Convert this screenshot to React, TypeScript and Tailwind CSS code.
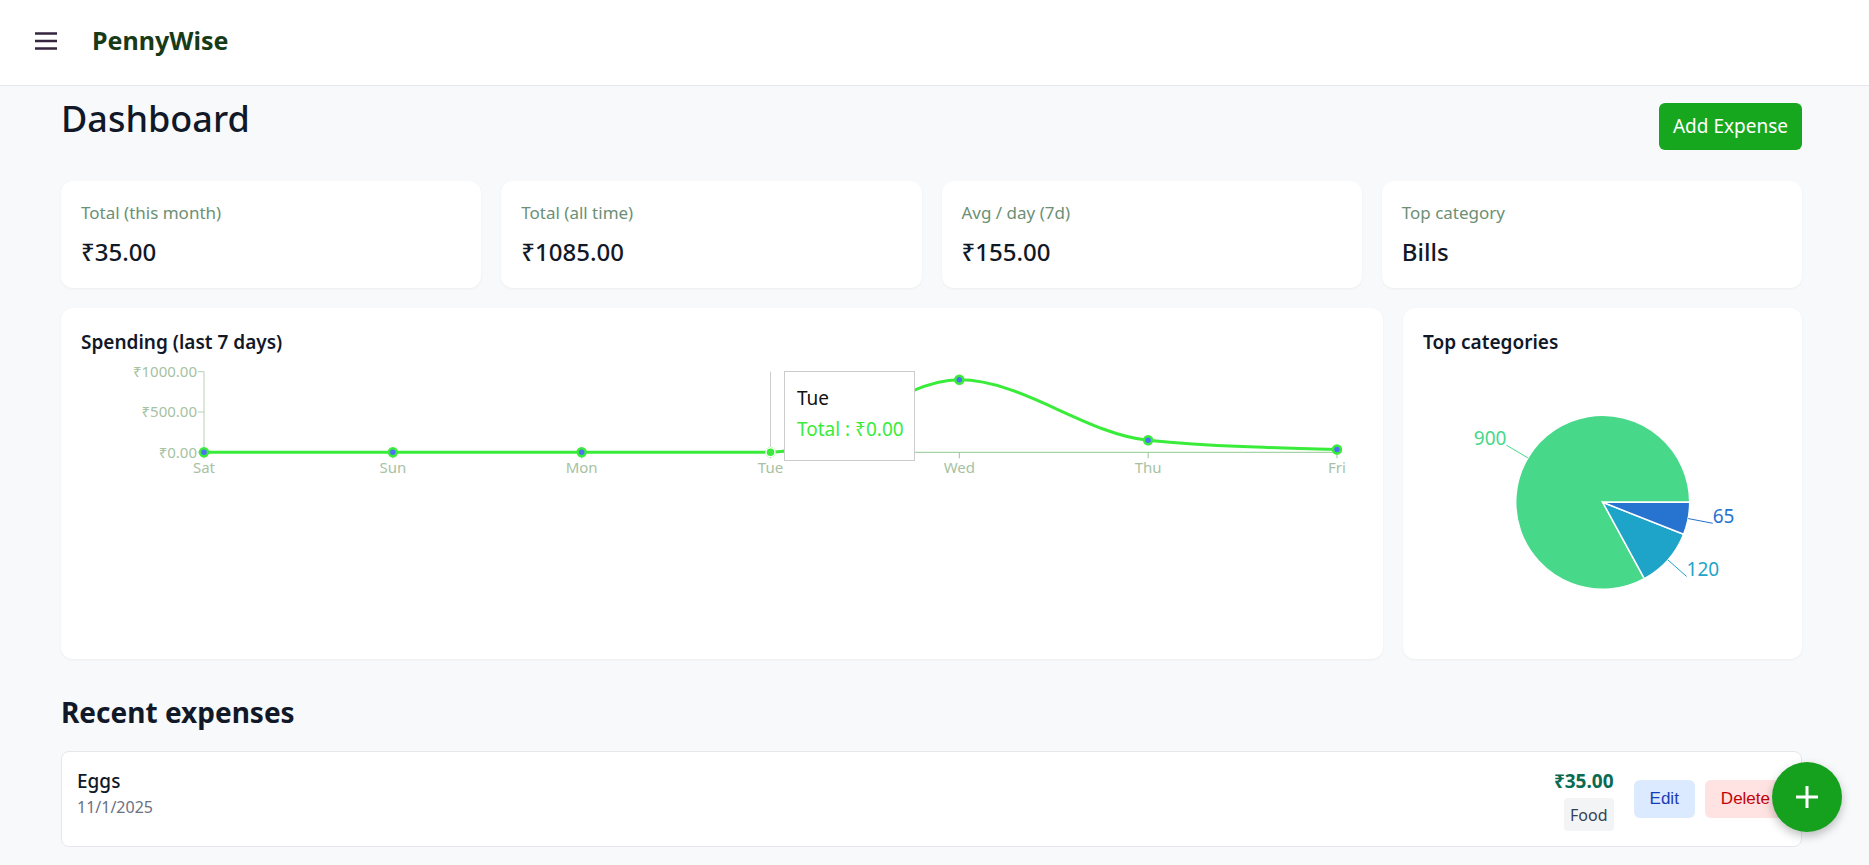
import React from 'react';

const days = ['Sat', 'Sun', 'Mon', 'Tue', 'Wed', 'Thu', 'Fri'];
const totals = [0, 0, 0, 0, 900, 150, 35];

const LINE = '#39ec39';
const AXIS_X = '#93c993';
const AXIS_Y = '#b7cfb3';
const TICK_TEXT = '#a6c2a2';

const X0 = 123;
const STEP = 188.83;
const Y0 = 88.3;
const PER = 0.0806;

const px = (i: number) => X0 + i * STEP;
const py = (v: number) => Y0 - v * PER;

// d3 curveMonotoneX, same as recharts "monotone"
function monotonePath(pts: [number, number][]) {
  const n = pts.length;
  const t: number[] = new Array(n).fill(0);
  for (let i = 1; i < n - 1; i++) {
    const h0 = pts[i][0] - pts[i - 1][0];
    const h1 = pts[i + 1][0] - pts[i][0];
    const s0 = (pts[i][1] - pts[i - 1][1]) / h0;
    const s1 = (pts[i + 1][1] - pts[i][1]) / h1;
    const p = (s0 * h1 + s1 * h0) / (h0 + h1);
    t[i] = (Math.sign(s0) + Math.sign(s1)) * Math.min(Math.abs(s0), Math.abs(s1), 0.5 * Math.abs(p)) || 0;
  }
  const hs = pts[1][0] - pts[0][0];
  t[0] = (3 * (pts[1][1] - pts[0][1]) / hs - t[1]) / 2;
  const he = pts[n - 1][0] - pts[n - 2][0];
  t[n - 1] = (3 * (pts[n - 1][1] - pts[n - 2][1]) / he - t[n - 2]) / 2;
  let d = `M${pts[0][0]},${pts[0][1]}`;
  for (let i = 0; i < n - 1; i++) {
    const dx = (pts[i + 1][0] - pts[i][0]) / 3;
    d += `C${pts[i][0] + dx},${pts[i][1] + dx * t[i]},${pts[i + 1][0] - dx},${pts[i + 1][1] - dx * t[i + 1]},${pts[i + 1][0]},${pts[i + 1][1]}`;
  }
  return d;
}

function SpendingChart() {
  const pts = totals.map((v, i) => [px(i), py(v)] as [number, number]);
  return (
    <svg width="100%" height={275} overflow="visible" className="block overflow-visible font-['Noto_Sans',sans-serif]">
      {/* y axis */}
      <line x1={X0} y1={py(1000)} x2={X0} y2={Y0} stroke={AXIS_Y} />
      {[0, 500, 1000].map(v => (
        <g key={v}>
          <line x1={X0 - 6} y1={py(v)} x2={X0} y2={py(v)} stroke={AXIS_Y} />
          <text x={X0 - 7} y={py(v)} dy="0.355em" textAnchor="end" fontSize={15} fill={TICK_TEXT}>
            ₹{v.toFixed(2)}
          </text>
        </g>
      ))}
      {/* x axis */}
      <line x1={X0} y1={Y0} x2={px(6)} y2={Y0} stroke={AXIS_X} />
      {days.map((d, i) => (
        <g key={d}>
          <line x1={px(i)} y1={Y0} x2={px(i)} y2={Y0 + 6} stroke={AXIS_X} />
          <text x={px(i)} y={108.5} textAnchor="middle" fontSize={15} fill={TICK_TEXT}>{d}</text>
        </g>
      ))}
      {/* cursor */}
      <line x1={px(3)} y1={py(1000)} x2={px(3)} y2={Y0} stroke="#cccccc" />
      <path d={monotonePath(pts)} fill="none" stroke={LINE} strokeWidth={3} />
      {pts.map(([x, y], i) => (
        <circle key={i} cx={x} cy={y} r={4} fill="#4f6ef7" stroke={LINE} strokeWidth={2.5} />
      ))}
      <circle cx={px(3)} cy={Y0} r={4.5} fill={LINE} stroke="#fff" strokeWidth={1.5} />
    </svg>
  );
}

const slices = [
  { value: 900, color: '#47d88a' },
  { value: 120, color: '#1ea4c9' },
  { value: 65, color: '#2673d0' },
];

function CategoryPie() {
  const cx = 179.7;
  const cy = 146.3;
  const r = 87;
  const total = slices.reduce((a, s) => a + s.value, 0);
  const pt = (deg: number, rad: number) => {
    const a = (deg * Math.PI) / 180;
    return [cx + rad * Math.cos(a), cy - rad * Math.sin(a)];
  };
  let start = 0;
  return (
    <svg width="100%" height={283} className="block font-['Noto_Sans',sans-serif]">
      {slices.map(s => {
        const sweep = (s.value / total) * 360;
        const end = start + sweep;
        const [x1, y1] = pt(start, r);
        const [x2, y2] = pt(end, r);
        const mid = start + sweep / 2;
        const [lx1, ly1] = pt(mid, r);
        const [lx2, ly2] = pt(mid, r + 25);
        const left = lx2 < cx;
        const d = `M${cx},${cy}L${x1},${y1}A${r},${r},0,${sweep > 180 ? 1 : 0},0,${x2},${y2}Z`;
        start = end;
        return (
          <g key={s.value}>
            <path d={d} fill={s.color} stroke="#fff" strokeWidth={1.5} />
            <path d={`M${lx1},${ly1}L${lx2},${ly2}`} stroke={s.color} fill="none" />
            <text x={lx2} y={ly2} textAnchor={left ? 'end' : 'start'} fontSize={19} fill={s.color}>
              {s.value}
            </text>
          </g>
        );
      })}
    </svg>
  );
}

const stats = [
  { label: 'Total (this month)', value: '₹35.00' },
  { label: 'Total (all time)', value: '₹1085.00' },
  { label: 'Avg / day (7d)', value: '₹155.00' },
  { label: 'Top category', value: 'Bills' },
];

export default function App() {
  return (
    <div className="min-h-screen bg-[#f8f9fb] font-['Noto_Sans',sans-serif] text-[#111827]">
      <header className="h-[86px] bg-white border-b border-gray-200 flex items-center pl-[35px] gap-[35px] pb-1">
        <svg width="22" height="18" viewBox="0 0 22 18">
          <path d="M0 1.5H22M0 9H22M0 16.5H22" stroke="#35253f" strokeWidth="2.4" />
        </svg>
        <span className="text-[25px] font-bold text-[#173a17]">PennyWise</span>
      </header>

      <main className="pl-[61px] pr-[67px] pt-[13px] pb-10">
        <div className="flex items-start justify-between">
          <h1 className="text-4xl font-medium">Dashboard</h1>
          <button className="mt-[4px] h-[47px] px-[14px] rounded-md bg-[#17a71f] text-white text-[19px]">
            Add Expense
          </button>
        </div>

        <div className="grid grid-cols-4 gap-5 mt-[31px]">
          {stats.map(s => (
            <div key={s.label} className="bg-white rounded-xl shadow-[0_1px_3px_rgba(0,0,0,0.05)] p-5">
              <div className="text-[17px] leading-6 text-[#6d8f76]">{s.label}</div>
              <div className="text-2xl font-medium mt-[11px]">{s.value}</div>
            </div>
          ))}
        </div>

        <div className="grid grid-cols-[1fr_399px] gap-5 mt-5">
          <div className="relative h-[351px] bg-white rounded-xl shadow-[0_1px_3px_rgba(0,0,0,0.05)] p-5">
            <h3 className="text-[19px] leading-7 font-semibold">Spending (last 7 days)</h3>
            <div className="mt-2">
              <SpendingChart />
            </div>
            <div className="absolute left-[723px] top-[63px] w-[131px] h-[90px] bg-white border border-[#cccccc] pl-[12px] pt-[13px]">
              <div className="text-[19px] leading-[27px] text-[#111]">Tue</div>
              <div className="text-[19px] leading-[27px] pt-[4px] text-[#39ec39]">Total : ₹0.00</div>
            </div>
          </div>
          <div className="h-[351px] bg-white rounded-xl shadow-[0_1px_3px_rgba(0,0,0,0.05)] p-5">
            <h3 className="text-[19px] leading-7 font-semibold">Top categories</h3>
            <CategoryPie />
          </div>
        </div>

        <h2 className="text-[28px] leading-9 font-bold mt-[35px]">Recent expenses</h2>

        <div className="mt-[21px] bg-white border border-gray-200 rounded-lg p-[15px] flex items-start justify-between">
          <div>
            <div className="text-[19px] leading-7 font-medium">Eggs</div>
            <div className="text-base text-gray-500">11/1/2025</div>
          </div>
          <div className="flex items-center gap-5">
            <div className="flex flex-col items-end">
              <div className="text-[19px] leading-7 font-bold text-[#0b6b52]">₹35.00</div>
              <span className="mt-[3px] h-[33px] flex items-center px-1.5 rounded bg-gray-100 text-base text-gray-700">
                Food
              </span>
            </div>
            <div className="flex items-center gap-2.5 font-['Liberation_Sans',Arial,sans-serif]">
              <button className="px-4 py-1.5 rounded-md bg-blue-100 text-blue-800 text-[17px]">Edit</button>
              <button className="px-4 py-1.5 rounded-md bg-red-100 text-red-700 text-[17px]">Delete</button>
            </div>
          </div>
        </div>
      </main>

      <button className="fixed right-[27px] bottom-[33px] w-[70px] h-[70px] rounded-full bg-[#15a11e] shadow-[0_4px_10px_rgba(0,0,0,0.25)] flex items-center justify-center">
        <svg width="24" height="24" viewBox="0 0 24 24">
          <path d="M12 1V23M1 12H23" stroke="#fff" strokeWidth="3" />
        </svg>
      </button>
    </div>
  );
}
